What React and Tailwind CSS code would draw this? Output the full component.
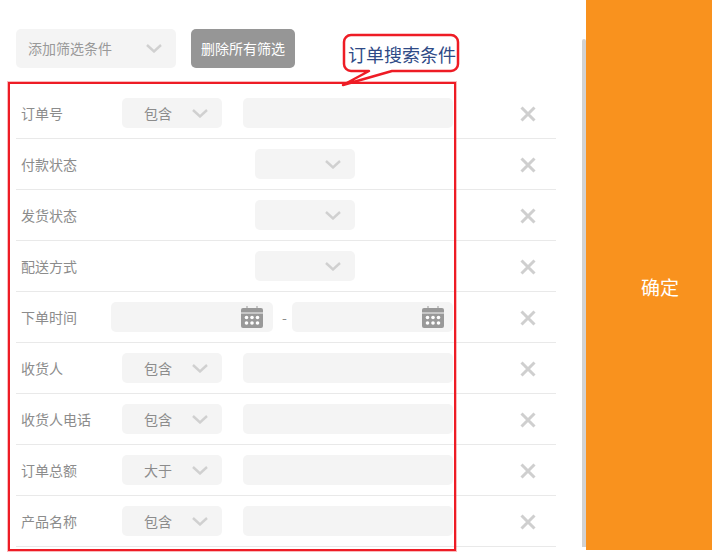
import React from 'react';

const FONT = '"Noto Sans CJK SC", "Noto Sans", sans-serif';

const rows = [
  { label: '订单号', type: 'text', op: '包含' },
  { label: '付款状态', type: 'select' },
  { label: '发货状态', type: 'select' },
  { label: '配送方式', type: 'select' },
  { label: '下单时间', type: 'date' },
  { label: '收货人', type: 'text', op: '包含' },
  { label: '收货人电话', type: 'text', op: '包含' },
  { label: '订单总额', type: 'text', op: '大于' },
  { label: '产品名称', type: 'text', op: '包含' },
];

function Chevron() {
  return (
    <svg width="16" height="9" viewBox="0 0 16 9" fill="none" className="shrink-0">
      <path d="M1 1l7 6.5L15 1" stroke="#d0d0d0" strokeWidth="2.4" />
    </svg>
  );
}

function CloseIcon() {
  return (
    <svg width="16" height="16" viewBox="0 0 16 16" fill="none" className="ml-auto mr-[20px] mt-[1px] shrink-0">
      <path d="M1.5 1.5l13 13M14.5 1.5l-13 13" stroke="#cfcfcf" strokeWidth="3" />
    </svg>
  );
}

function CalendarIcon() {
  return (
    <svg width="22" height="22" viewBox="0 0 22 22" className="shrink-0">
      <path d="M5.5 0h1v3h-1zM15.5 0h1v3h-1z" fill="#999" />
      <path d="M0 4a2 2 0 0 1 2-2h18a2 2 0 0 1 2 2v2.5H0z" fill="#999" />
      <path d="M0 7.5h22V20a2 2 0 0 1-2 2H2a2 2 0 0 1-2-2z" fill="#999" />
      <g fill="#fff">
        <circle cx="5.5" cy="11.5" r="1.8" />
        <circle cx="11" cy="11.5" r="1.8" />
        <circle cx="16.5" cy="11.5" r="1.8" />
        <circle cx="5.5" cy="17" r="1.8" />
        <circle cx="11" cy="17" r="1.8" />
        <circle cx="16.5" cy="17" r="1.8" />
      </g>
    </svg>
  );
}

function OpSelect({ value }) {
  return (
    <div className="ml-[11px] flex h-[30px] w-[100px] items-center justify-between rounded-[5px] bg-[#f4f4f4] pl-[22px] pr-[14px] text-[14px] text-[#8c8c8c]">
      <span>{value}</span>
      <Chevron />
    </div>
  );
}

function DateInput({ className }) {
  return (
    <div className={`flex h-[30px] items-center justify-end rounded-[5px] bg-[#f4f4f4] ${className}`}>
      <CalendarIcon />
    </div>
  );
}

function Row({ row }) {
  return (
    <div className="flex h-[51px] items-center border-b border-[#e9e9e9] pl-[5px]">
      <div className="w-[90px] shrink-0 whitespace-nowrap text-[14px] text-[#8c8c8c]">{row.label}</div>
      {row.type === 'text' && (
        <>
          <OpSelect value={row.op} />
          <div className="ml-[21px] h-[30px] w-[210px] rounded-[5px] bg-[#f4f4f4]" />
        </>
      )}
      {row.type === 'select' && (
        <div className="ml-[144px] flex h-[30px] w-[100px] items-center justify-end rounded-[5px] bg-[#f4f4f4] pr-[14px]">
          <Chevron />
        </div>
      )}
      {row.type === 'date' && (
        <>
          <DateInput className="w-[162px] pr-[10px]" />
          <span className="w-[19px] pl-[9px] text-[14px] text-[#8c8c8c]">-</span>
          <DateInput className="w-[161px] pr-[9px]" />
        </>
      )}
      <CloseIcon />
    </div>
  );
}

export default function App() {
  return (
    <div className="relative flex h-[552px] w-[712px] overflow-hidden bg-white" style={{ fontFamily: FONT }}>
      <main className="w-[582px] shrink-0 pl-[16px] pr-[26px] pt-[29px]">
        <div className="flex h-[39px] items-center gap-[15px]">
          <div className="flex h-[39px] w-[160px] items-center justify-between rounded-[5px] bg-[#f4f4f4] pl-[12px] pr-[14px] text-[14px] text-[#999]">
            <span>添加筛选条件</span>
            <Chevron />
          </div>
          <button className="h-[39px] w-[104px] rounded-[5px] bg-[#969696] text-center text-[14px] text-white">删除所有筛选</button>
        </div>
        <div className="mt-[20px]">
          {rows.map((row) => <Row key={row.label} row={row} />)}
        </div>
      </main>

      <div className="mt-[39px] h-[508px] w-[4px] shrink-0 rounded-t-[2px] bg-[#d2d2d2]" />

      <div className="flex h-[550px] w-[126px] shrink-0 items-center justify-center bg-[#f9921e] pl-[22px] pt-[25px] text-[19px] text-white">确定</div>

      {/* annotation laid over the form */}
      <div className="absolute left-[8px] top-[82px] h-[469px] w-[448px] border-2 border-[#ee1c25] shadow-[0_0_0_1px_rgba(238,28,37,0.3)]" />
      <svg width="120" height="56" viewBox="0 0 120 56" fill="none" className="absolute left-[341px] top-[32px]">
        <path
          d="M12 3h98a7 7 0 0 1 7 7v22a7 7 0 0 1-7 7H51L2 53l26-14H10a7 7 0 0 1-7-7V10a7 7 0 0 1 7-7z"
          fill="#fff"
          stroke="#ee1c25"
          strokeWidth="2.5"
          strokeLinejoin="round"
        />
      </svg>
      <div className="absolute left-[348px] top-[41px] whitespace-nowrap text-[18px] leading-[26px] text-[#2f4a86]">订单搜索条件</div>
    </div>
  );
}
